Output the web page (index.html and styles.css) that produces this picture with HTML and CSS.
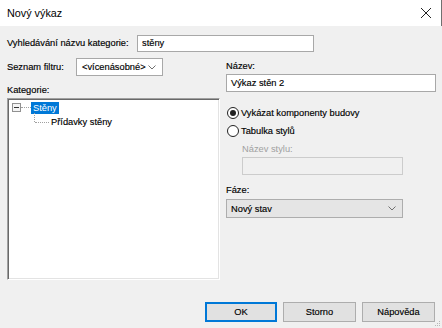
FILE: index.html
```html
<!DOCTYPE html>
<html lang="cs">
<head>
<meta charset="utf-8">
<link rel="stylesheet" href="styles.css">
</head>
<body>
<div class="window">
  <div class="titlebar">
    <span class="title">Nový výkaz</span>
    <svg class="close" width="12" height="12" viewBox="0 0 12 12"><path d="M1 1 L11 11 M11 1 L1 11" stroke="#222" stroke-width="1" fill="none"/></svg>
  </div>
  <div class="content">
    <div class="search-row">
      <span class="label search-label">Vyhledávání názvu kategorie:</span>
      <div class="textbox search-box">stěny</div>
    </div>
    <div class="main">
      <div class="left">
        <div class="filter-row">
          <span class="label filter-label">Seznam filtru:</span>
          <div class="dropdown filter-box">
            <span>&lt;vícenásobné&gt;</span>
            <svg class="chev" width="8" height="5" viewBox="0 0 8 5"><path d="M0.5 0.5 L4 4 L7.5 0.5" stroke="#707070" fill="none"/></svg>
          </div>
        </div>
        <div class="label cat-label">Kategorie:</div>
        <div class="tree">
          <div class="node root">
            <span class="expander"><span class="minus"></span></span>
            <span class="hline1"></span>
            <span class="sel">Stěny</span>
          </div>
          <div class="node child">
            <span class="vline"></span>
            <span class="hline2"></span>
            <span class="child-text">Přídavky stěny</span>
          </div>
        </div>
      </div>
      <div class="right">
        <div class="label name-label">Název:</div>
        <div class="textbox name-box">Výkaz stěn 2</div>
        <div class="radio-row r1"><span class="radio checked"></span><span>Vykázat komponenty budovy</span></div>
        <div class="radio-row r2"><span class="radio"></span><span>Tabulka stylů</span></div>
        <div class="label disabled style-label">Název stylu:</div>
        <div class="textbox disabled-box"></div>
        <div class="label phase-label">Fáze:</div>
        <div class="combo phase-box">
          <span>Nový stav</span>
          <svg class="chev" width="8" height="5" viewBox="0 0 8 5"><path d="M0.5 0.5 L4 4 L7.5 0.5" stroke="#707070" fill="none"/></svg>
        </div>
      </div>
    </div>
    <div class="buttons">
      <div class="btn default">OK</div>
      <div class="btn">Storno</div>
      <div class="btn">Nápověda</div>
    </div>
    <div class="grip">
      <svg width="6" height="6" viewBox="0 0 6 6"><rect x="4" y="0" width="1" height="1" fill="#b8b8b8"/><rect x="2" y="2" width="1" height="1" fill="#b8b8b8"/><rect x="4" y="2" width="1" height="1" fill="#b8b8b8"/><rect x="0" y="4" width="1" height="1" fill="#b8b8b8"/><rect x="2" y="4" width="1" height="1" fill="#b8b8b8"/><rect x="4" y="4" width="1" height="1" fill="#b8b8b8"/></svg>
    </div>
  </div>
</div>
</body>
</html>
```
FILE: styles.css
```css
* { box-sizing: border-box; }
html, body { margin: 0; padding: 0; }
body {
  width: 442px;
  height: 328px;
  overflow: hidden;
  font-family: "Liberation Sans", Arial, sans-serif;
  font-size: 9.3px;
  color: #000;
  -webkit-text-stroke: 0.15px #000;
}
.window {
  width: 442px;
  height: 328px;
  display: flex;
  flex-direction: column;
}
.titlebar {
  height: 26px;
  background: #fff;
  display: flex;
  align-items: center;
  justify-content: space-between;
  padding: 0 9px 0 7px;
  border-right: 1px solid #707070;
}
.title { font-size: 10.8px; -webkit-text-stroke: 0; }
.close { display: block; }
.content {
  flex: 1;
  background: #f0f0f0;
  display: flex;
  flex-direction: column;
  padding: 9px 0 6px 7px;
  position: relative;
}
.label { line-height: 13px; white-space: nowrap; }
.textbox {
  background: #fff;
  border: 1px solid #a8a8a8;
  height: 17px;
  padding: 0 4px;
  line-height: 15px;
}
.search-row { display: flex; align-items: center; }
.search-label { width: 130px; }
.search-box { width: 177px; }
.main { display: flex; margin-top: 0; }
.left { width: 213px; display: flex; flex-direction: column; }
.filter-row { display: flex; align-items: center; margin-top: 6px; }
.filter-label { width: 69px; }
.dropdown {
  width: 87px;
  height: 18px;
  background: #fff;
  border: 1px solid #a8a8a8;
  display: flex;
  align-items: center;
  justify-content: space-between;
  padding: 0 6px 0 5px;
}
.chev { display: block; }
.cat-label { margin-top: 8px; }
.tree {
  margin-top: 1px;
  height: 182px;
  background: #fff;
  border: 1px solid;
  border-color: #a0a0a0 #ffffff #ffffff #a0a0a0;
  box-shadow: inset 1px 1px 0 #696969, inset -1px -1px 0 #e3e3e3;
  padding: 2px 0 0 3px;
}
.node { display: flex; align-items: center; height: 13px; position: relative; }
.expander {
  width: 9px;
  height: 9px;
  border: 1px solid #919191;
  background: #f4f4f4;
  margin-left: 1px;
  display: flex;
  align-items: center;
  justify-content: center;
}
.minus { width: 5px; height: 1px; background: #333; }
.hline1 { width: 10px; border-top: 1px dotted #a0a0a0; }
.sel {
  background: #0078d7;
  color: #fff;
  -webkit-text-stroke: 0;
  padding: 0 2px;
  line-height: 12px;
}
.child { margin-top: 1px; }
.vline {
  position: absolute;
  left: 23px;
  top: -2px;
  height: 9px;
  border-left: 1px dotted #a0a0a0;
}
.hline2 { margin-left: 24px; width: 14px; border-top: 1px dotted #a0a0a0; margin-top: 1px; }
.child-text { margin-left: 2px; }
.right { width: 210px; margin-left: 6px; display: flex; flex-direction: column; }
.name-label { margin-top: 8px; }
.name-box { margin-top: 1px; height: 18px; width: 210px; line-height: 16px; }
.radio-row { display: flex; align-items: center; height: 16px; }
.r1 { margin-top: 13px; }
.r2 { margin-top: 2px; }
.radio {
  width: 12px;
  height: 12px;
  border-radius: 50%;
  border: 1px solid #222;
  background: #fff;
  margin-left: 1px;
  margin-right: 2px;
  display: flex;
  align-items: center;
  justify-content: center;
}
.radio.checked::after {
  content: "";
  width: 6px;
  height: 6px;
  border-radius: 50%;
  background: #222;
}
.disabled { color: #a0a0a0; -webkit-text-stroke: 0; }
.style-label { margin-left: 16px; margin-top: 4px; }
.disabled-box {
  margin-left: 16px;
  margin-top: 1px;
  width: 161px;
  height: 18px;
  background: #f0f0f0;
  border-color: #cccccc;
}
.phase-label { margin-top: 9px; }
.combo {
  margin-top: 2px;
  width: 177px;
  height: 19px;
  background: #e5e5e5;
  border: 1px solid #adadad;
  display: flex;
  align-items: center;
  justify-content: space-between;
  padding: 0 6px 0 4px;
}
.buttons {
  margin-top: auto;
  display: flex;
  justify-content: flex-end;
  gap: 6px;
  padding-right: 7px;
}
.btn {
  width: 73px;
  height: 20px;
  background: #e1e1e1;
  border: 1px solid #adadad;
  display: flex;
  align-items: center;
  justify-content: center;
}
.btn.default { width: 72px; border: 1px solid #0078d7; box-shadow: inset 0 0 0 1px #0078d7; }
.grip { position: absolute; right: 1px; bottom: 1px; line-height: 0; }
```
